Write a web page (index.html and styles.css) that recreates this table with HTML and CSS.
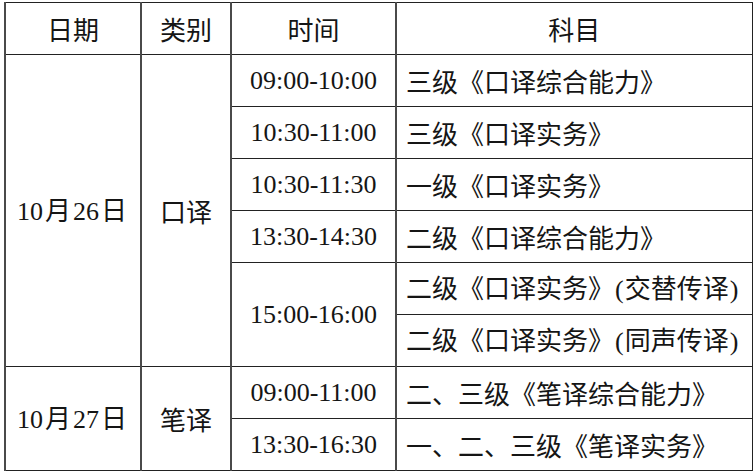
FILE: index.html
```html
<!DOCTYPE html>
<html lang="zh-CN">
<head>
<meta charset="utf-8">
<link rel="stylesheet" href="styles.css">
</head>
<body>
<table class="schedule">
  <colgroup>
    <col class="c-date">
    <col class="c-type">
    <col class="c-time">
    <col class="c-subj">
  </colgroup>
  <thead>
    <tr>
      <th>日期</th>
      <th>类别</th>
      <th>时间</th>
      <th>科目</th>
    </tr>
  </thead>
  <tbody>
    <tr>
      <td class="date" rowspan="6">10<span class="unit">月</span>26<span class="unit">日</span></td>
      <td class="center" rowspan="6">口译</td>
      <td class="time">09:00-10:00</td>
      <td class="subj">三级《口译综合能力》</td>
    </tr>
    <tr>
      <td class="time">10:30-11:00</td>
      <td class="subj">三级《口译实务》</td>
    </tr>
    <tr>
      <td class="time">10:30-11:30</td>
      <td class="subj">一级《口译实务》</td>
    </tr>
    <tr>
      <td class="time">13:30-14:30</td>
      <td class="subj">二级《口译综合能力》</td>
    </tr>
    <tr>
      <td class="time" rowspan="2">15:00-16:00</td>
      <td class="subj">二级《口译实务》<span class="paren">(</span>交替传译<span class="paren">)</span></td>
    </tr>
    <tr>
      <td class="subj">二级《口译实务》<span class="paren">(</span>同声传译<span class="paren">)</span></td>
    </tr>
    <tr>
      <td class="date" rowspan="2">10<span class="unit">月</span>27<span class="unit">日</span></td>
      <td class="center" rowspan="2">笔译</td>
      <td class="time">09:00-11:00</td>
      <td class="subj">二、三级《笔译综合能力》</td>
    </tr>
    <tr>
      <td class="time">13:30-16:30</td>
      <td class="subj">一、二、三级《笔译实务》</td>
    </tr>
  </tbody>
</table>
</body>
</html>
```
FILE: styles.css
```css
html, body {
  margin: 0;
  padding: 0;
  background: #ffffff;
}

body {
  padding: 2px 0 0 4px;
}

.schedule {
  border-collapse: collapse;
  table-layout: fixed;
  width: 747px;
  color: #151515;
  font-family: "Liberation Serif", "Noto Sans CJK SC", serif;
  font-size: 26px;
}

.c-date { width: 136px; }
.c-type { width: 90px; }
.c-time { width: 165px; }
.c-subj { width: 356px; }

.schedule th,
.schedule td {
  border: 1px solid #222;
  height: 52px;
  padding: 0;
  box-sizing: border-box;
  line-height: 1;
  vertical-align: middle;
}

.schedule th {
  font-family: "Noto Sans CJK SC", sans-serif;
  font-weight: 400;
  text-align: center;
}

.schedule tr > :nth-child(n) {
  border-left: 2px solid #4a4a4a;
}

.center {
  text-align: center;
  font-family: "Noto Sans CJK SC", sans-serif;
}

.date {
  text-align: center;
  font-family: "Liberation Serif", "Noto Sans CJK SC", serif;
  white-space: nowrap;
}

.unit {
  font-family: "Noto Sans CJK SC", sans-serif;
  margin: 0 2px;
}

.time {
  text-align: center;
  font-family: "Liberation Serif", serif;
}

.subj {
  text-align: left;
  padding-left: 9px !important;
  font-family: "Noto Sans CJK SC", sans-serif;
  white-space: nowrap;
}

.paren {
  font-family: "Liberation Serif", serif;
  margin: 0 1px;
}
```
